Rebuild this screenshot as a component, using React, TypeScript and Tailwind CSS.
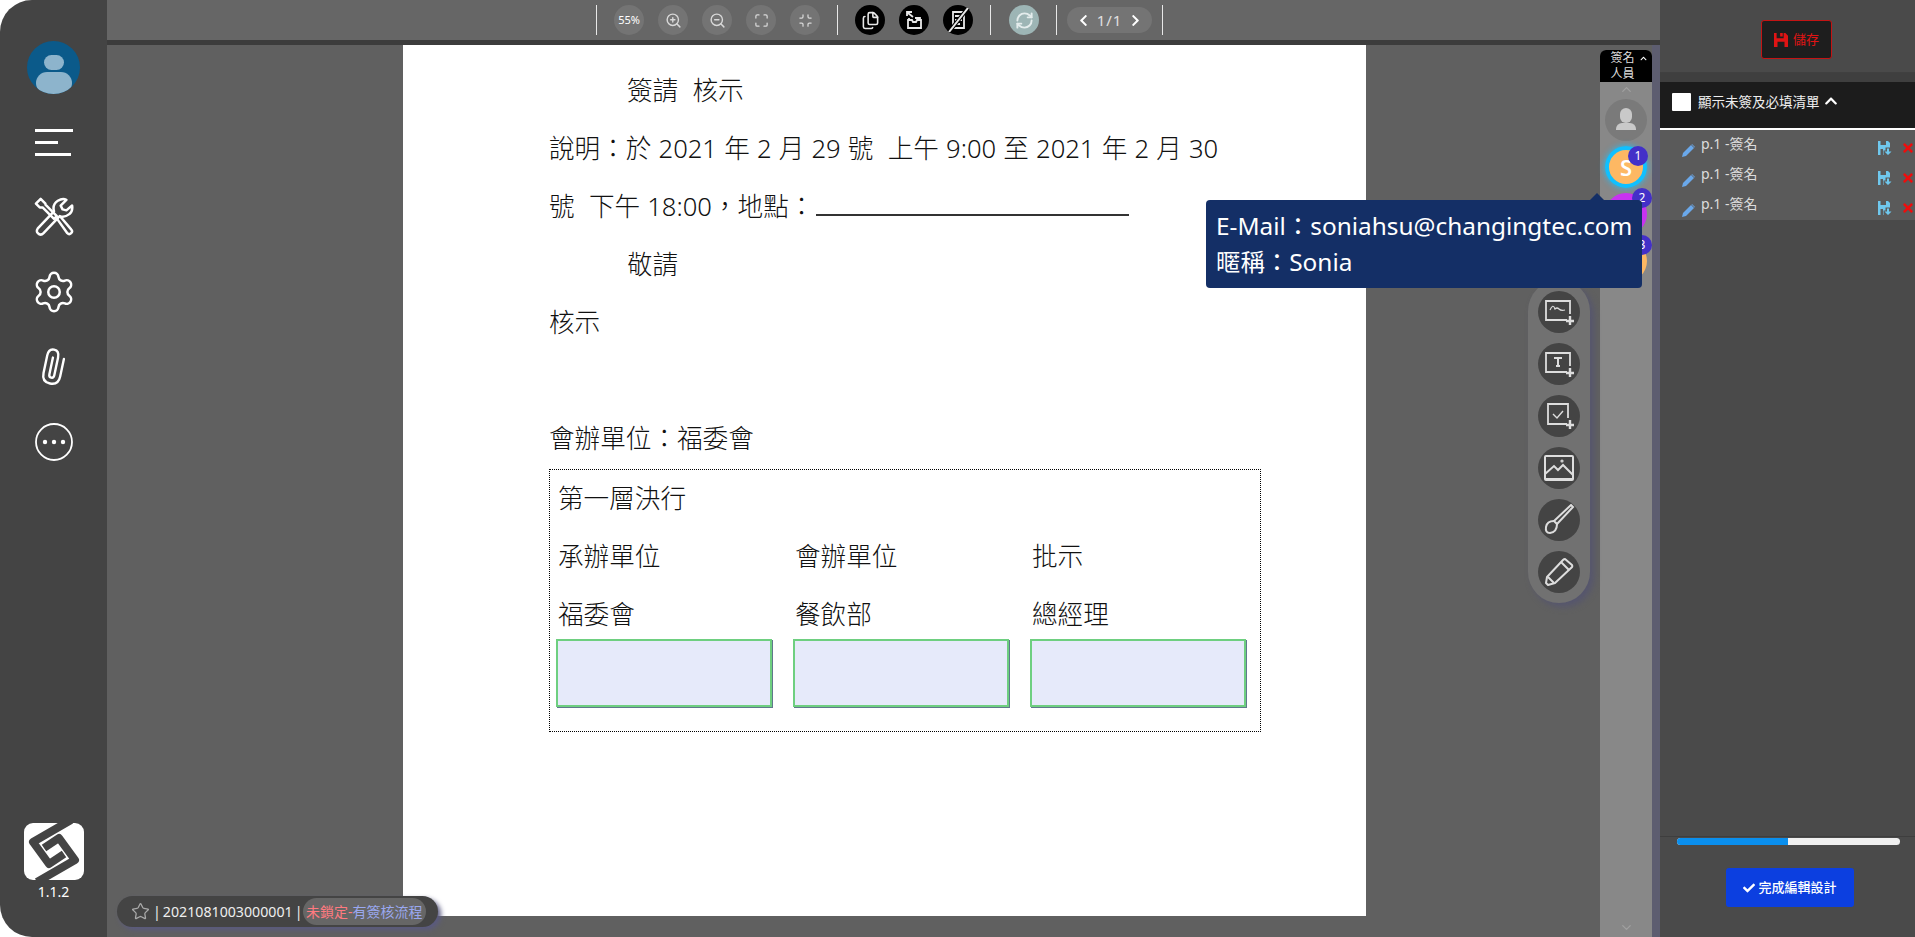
import { ChevronUp, Files, Maximize, Minimize, RefreshCw, Settings, Star, ZoomIn, ZoomOut } from 'lucide-react';
import { FaCheck, FaChevronLeft, FaChevronRight, FaChevronUp, FaTimes } from 'react-icons/fa';

function ToolsIcon() {
  return (
    <svg width="40" height="40" viewBox="0 0 42 42" fill="none" stroke="white" strokeWidth="2.6" strokeLinejoin="round" strokeLinecap="round">
      <path d="M7 2 L2 7 L6 11 L9 11 L21 23 L24 20 L12 8 L12 7 Z" />
      <path d="M25 24 L35 38 Q37 40 39 38 Q41 36 39 34 L28 21" />
      <path d="M4 33 L21 15 Q19 8 25 4 Q30 1 34 3 L28 9 L30 13 L34 14 L40 9 Q41 15 37 18 Q32 22 27 20 L10 38 Q7 41 4 38 Q2 36 4 33 Z" />
    </svg>
  );
}

function ClipIcon() {
  return (
    <svg width="30" height="40" viewBox="0 0 30 40" fill="none" stroke="white" strokeWidth="2.4" strokeLinecap="round">
      <path d="M23 10 V28 Q23 37 14.5 37 Q6 37 6 28 V10 Q6 3 11.5 3 Q17 3 17 10 V28 Q17 31 14.5 31 Q12 31 12 28 V11" transform="rotate(12 15 20)" />
    </svg>
  );
}

function DotsIcon() {
  return (
    <svg width="38" height="38" viewBox="0 0 38 38" fill="none" stroke="white" strokeWidth="1.8">
      <circle cx="19" cy="19" r="18" />
      <circle cx="10" cy="19" r="2.2" fill="white" stroke="none" />
      <circle cx="19" cy="19" r="2.2" fill="white" stroke="none" />
      <circle cx="28" cy="19" r="2.2" fill="white" stroke="none" />
    </svg>
  );
}

function Logo() {
  return (
    <svg width="60" height="58" viewBox="0 0 60 58">
      <rect x="0" y="1" width="60" height="57" rx="9" fill="white" />
      <path d="M47 -2 L9 20 L25 42 L40 32" fill="none" stroke="#444444" strokeWidth="8" strokeLinejoin="round" />
      <path d="M13 60 L51 38 L35 16 L20 26" fill="none" stroke="#444444" strokeWidth="8" strokeLinejoin="round" />
    </svg>
  );
}

function SaveIcon({ size, className }: { size: number; className: string }) {
  return (
    <svg className={className} width={size} height={size} viewBox="0 0 16 16" fill="currentColor">
      <path fillRule="evenodd" d="M0 0 H3 V6 H11 V0 H13 L16 3 V16 H0 Z M4 10 V16 H12 V10 Z" />
      <rect x="7" y="0" width="3" height="4" />
    </svg>
  );
}

function RowSaveIcon() {
  return (
    <svg className="text-[#6fc8ee] shrink-0" width="14" height="14" viewBox="0 0 14 14" fill="currentColor">
      <path fillRule="evenodd" d="M0 0 H2.5 V4 H8 V0 H10 L12 2 V6.5 H7.5 V9.5 H5.5 V14 H0 Z M2.5 8 V14 H5 V8 Z" />
      <path d="M9 7.5 H11 V10.5 H13.5 L10 14 L6.5 10.5 H9 Z" />
    </svg>
  );
}

function RowPencil() {
  return (
    <svg className="text-[#6aa8ea] shrink-0 mt-[10px]" width="13" height="13" viewBox="0 0 13 13" fill="currentColor">
      <path d="M0 13 L1 9 L9 1 L12 4 L4 12 Z" />
      <path d="M10 0 L13 3 L12.5 3.5 L9.5 0.5 Z" />
    </svg>
  );
}

function ToolBtn({ children }: { children: React.ReactNode }) {
  return <div className="w-[30px] h-[30px] rounded-full bg-[#747474] flex items-center justify-center text-[#d8d8d8]">{children}</div>;
}

function BlackBtn({ children }: { children: React.ReactNode }) {
  return <div className="w-[30px] h-[30px] rounded-full bg-black flex items-center justify-center text-[#e8e8e8]">{children}</div>;
}

function Sep() {
  return <div className="w-px h-[30px] bg-[#e8e8e8]" />;
}

function FloatBtn({ children }: { children: React.ReactNode }) {
  return <div className="w-[42px] h-[42px] rounded-full bg-[#444444] flex items-center justify-center">{children}</div>;
}

const floatIcons = [
  <svg key="sign" width="32" height="32" viewBox="0 0 32 32" fill="none" stroke="#dddddd" strokeWidth="1.8">
    <path d="M24 24 H3 V5 H27 V18" />
    <path d="M7 14 Q10 7 12 13 Q14 11 16 13 T22 14" strokeWidth="1.2" />
    <path d="M27 20 V29 M23 25 H31" strokeWidth="2.4" />
  </svg>,
  <svg key="text" width="32" height="32" viewBox="0 0 32 32" fill="none" stroke="#dddddd" strokeWidth="1.8">
    <path d="M24 24 H3 V5 H27 V18" />
    <path d="M11 10 H19 M15 10 V18 M13 18 H17" strokeWidth="2" />
    <path d="M27 20 V29 M23 25 H31" strokeWidth="2.4" />
  </svg>,
  <svg key="check" width="32" height="32" viewBox="0 0 32 32" fill="none" stroke="#dddddd" strokeWidth="1.8">
    <path d="M24 24 H5 V4 H25 V18" />
    <path d="M10 14 L14 18 L20 11" strokeWidth="1.4" />
    <path d="M27 20 V29 M23 25 H31" strokeWidth="2.4" />
  </svg>,
  <svg key="image" width="32" height="32" viewBox="0 0 32 32" fill="none" stroke="#dddddd" strokeWidth="2">
    <rect x="2" y="4" width="28" height="24" rx="1" />
    <path d="M2 22 L11 14 L15 18 L20 13 L30 23 M2 27 H30" />
    <circle cx="19" cy="9" r="0.6" />
  </svg>,
  <svg key="brush" width="32" height="32" viewBox="0 0 32 32" fill="none" stroke="#dddddd" strokeWidth="2">
    <path d="M28 1 L30 3 L14 20 L11 17 Z" />
    <path d="M11 17 Q4 17 3 23 Q2 29 7 29 Q14 28 14 20" />
  </svg>,
  <svg key="pen" width="32" height="32" viewBox="0 0 32 32" fill="none" stroke="#dddddd" strokeWidth="2" strokeLinejoin="round">
    <path d="M22 3 L29 9 Q30 11 28 12 L12 27 L5 29 L3 27 L4 21 L20 4 Q21 3 22 3 Z" />
    <path d="M18 6 L26 14 M5 21 L11 27" />
  </svg>,
];

function Signer({ fill, ring, label, badge }: { fill: string; ring?: boolean; label?: string; badge: string }) {
  return (
    <div className="relative w-[42px] h-[42px] shrink-0">
      <div className={fill}>{label}</div>
      {ring && <div className="absolute inset-0 rounded-full shadow-[0_0_6px_#22bdf5]" />}
      {ring ? (
        <div className="absolute top-0 -right-[1px] w-5 h-5 rounded-full bg-[#4330c8] text-white text-xs flex items-center justify-center">{badge}</div>
      ) : (
        <div className="absolute -top-[5px] -right-[5px] w-5 h-5 rounded-full bg-[#4330c8] text-white text-xs flex items-center justify-center">{badge}</div>
      )}
    </div>
  );
}

export default function App() {
  const rows = [1, 2, 3];
  const columns = [
    { head: '承辦單位', unit: '福委會' },
    { head: '會辦單位', unit: '餐飲部' },
    { head: '批示', unit: '總經理' },
  ];

  return (
    <div className="relative flex h-[937px] w-[1915px] overflow-hidden bg-white font-['Noto_Sans','Noto_Sans_CJK_TC',sans-serif]">
      {/* Left rail */}
      <aside className="w-[107px] shrink-0 bg-[#444444] rounded-l-[32px] flex flex-col items-center pt-[41px] pb-[37px] text-white">
        <div className="w-[53px] h-[53px] rounded-full bg-[#0b5a8a] overflow-hidden flex flex-col items-center pt-[14px]">
          <div className="w-[20px] h-[20px] rounded-full bg-[#8db4cc]" />
          <div className="w-[36px] h-[30px] rounded-full bg-[#8db4cc] mt-[2px]" />
        </div>
        <div className="mt-[35px] w-[38px] flex flex-col gap-[9px]">
          <div className="h-[3px] w-[38px] bg-white" />
          <div className="h-[3px] w-[23px] bg-white" />
          <div className="h-[3px] w-[36px] bg-white" />
        </div>
        <div className="mt-[41px]"><ToolsIcon /></div>
        <Settings className="mt-[32px]" size={46} strokeWidth={1.3} />
        <div className="mt-[32px]"><ClipIcon /></div>
        <div className="mt-[36px]"><DotsIcon /></div>
        <div className="mt-auto"><Logo /></div>
        <div className="mt-1 text-sm leading-4">1.1.2</div>
      </aside>

      {/* Viewer */}
      <main className="w-[1553px] shrink-0 flex flex-col bg-[#606060]">
        <div className="h-10 bg-[#666666] flex items-center pl-[489px] text-xs">
          <Sep />
          <div className="ml-[17px]"><ToolBtn><span className="text-[11px] text-white">55%</span></ToolBtn></div>
          <div className="ml-[14px]"><ToolBtn><ZoomIn size={17} /></ToolBtn></div>
          <div className="ml-[14px]"><ToolBtn><ZoomOut size={17} /></ToolBtn></div>
          <div className="ml-[14px]"><ToolBtn><Maximize size={15} /></ToolBtn></div>
          <div className="ml-[14px]"><ToolBtn><Minimize size={15} /></ToolBtn></div>
          <div className="ml-[17px]"><Sep /></div>
          <div className="ml-[17px]"><BlackBtn><Files size={19} /></BlackBtn></div>
          <div className="ml-[14px]">
            <BlackBtn>
              <svg width="20" height="20" viewBox="0 0 20 20" fill="none" stroke="currentColor" strokeWidth="1.8">
                <path d="M4 10 H8 L9 12 H12 L13 10 H17 V18 H4 Z M5 10 V8 M16 10 V8 H11" />
                <path d="M9 7 L4 3 M3 6 L3 2 L8 2" strokeWidth="1.8" />
              </svg>
            </BlackBtn>
          </div>
          <div className="ml-[14px]">
            <BlackBtn>
              <svg width="24" height="24" viewBox="0 0 24 24" fill="none" stroke="currentColor" strokeWidth="1.8">
                <path d="M7 4 H18 V20 H7 Z M9 8 H16 M9 12 H16 M9 16 H14" />
                <path d="M3 24 L22 0" stroke="black" strokeWidth="4" />
                <path d="M3 24 L22 0" strokeWidth="2" />
              </svg>
            </BlackBtn>
          </div>
          <div className="ml-[17px]"><Sep /></div>
          <div className="ml-[18px] w-[30px] h-[30px] rounded-full bg-[#9db5b5] flex items-center justify-center text-[#e4ecec]"><RefreshCw size={19} strokeWidth={2.4} /></div>
          <div className="ml-[17px]"><Sep /></div>
          <div className="ml-[10px] w-[85px] h-[26px] rounded-full bg-[#747474] flex items-center justify-center gap-[7px] text-[#e0e0e0] text-[15px]">
            <FaChevronLeft className="text-white" size={13} />
            <span className="tracking-[1px]">1/1</span>
            <FaChevronRight className="text-white" size={13} />
          </div>
          <div className="ml-[10px]"><Sep /></div>
        </div>
        <div className="h-[5px] bg-[#3c3c3c]" />

        <div className="flex flex-1 min-h-0">
          {/* Document page */}
          <div className="ml-[296px] w-[963px] h-[871px] shrink-0 bg-white pt-[17px] pl-[146px] text-[25.6px] leading-[58px] text-[#111111] font-light [word-spacing:0.5px]">
            <div className="pl-[78px]">簽請&nbsp;&nbsp;核示</div>
            <div>說明：於 2021 年 2 月 29 號&nbsp;&nbsp;上午 9:00 至 2021 年 2 月 30</div>
            <div>
              號&nbsp;&nbsp;下午 18:00，地點：<span className="inline-block w-[313px] h-[28px] ml-[2px] border-b-2 border-[#333333] align-baseline" />
            </div>
            <div className="pl-[78px]">敬請</div>
            <div>核示</div>
            <div className="h-[58px]" />
            <div>會辦單位：福委會</div>
            <div className="w-[712px] h-[263px] border border-dotted border-black pl-[8px] mt-[1px]">
              <div>第一層決行</div>
              <div className="grid grid-cols-[237px_237px_237px]">
                {columns.map((col) => (
                  <div key={col.head}>
                    <div>{col.head}</div>
                    <div>{col.unit}</div>
                    <div className="-ml-[2px] mt-[-5px] w-[216px] h-[68px] bg-[#e6eafa] border-2 border-[#6ecf80] shadow-[1px_1px_0_#60788c]" />
                  </div>
                ))}
              </div>
            </div>
          </div>

          {/* Signer column */}
          <div className="ml-[234px] w-[52px] shrink-0 bg-[#888888] flex flex-col items-center self-stretch mt-[5px] rounded-t-md">
            <div className="w-[52px] h-[32px] bg-black rounded-t-md flex items-start justify-center gap-1 text-[12px] leading-[16px] text-[#dddddd] pl-1">
              <div className="w-[26px] text-center">簽名 人員</div>
              <FaChevronUp className="mt-[5px] text-white" size={7} />
            </div>
            <ChevronUp className="text-[#a0a0a0]" size={15} />
            <div className="mt-[2px] flex flex-col gap-[5px]">
              <div className="w-[42px] h-[42px] rounded-full bg-[#7a7a7a] flex flex-col items-center pt-[9px]">
                <div className="w-[12px] h-[15px] rounded-full bg-[#c9c9c9]" />
                <div className="w-[20px] h-[7px] rounded-t-md bg-[#c9c9c9]" />
              </div>
              <Signer fill="w-[42px] h-[42px] rounded-full bg-[#fdb863] border-4 border-[#10c0ff] text-white text-[22px] font-semibold flex items-center justify-center" ring label="S" badge="1" />
              <Signer fill="w-[42px] h-[42px] rounded-full bg-[#c832f0]" badge="2" />
              <Signer fill="w-[42px] h-[42px] rounded-full bg-[#fdb863]" badge="3" />
            </div>
            <ChevronUp className="mt-auto mb-[2px] rotate-180 text-[#a0a0a0]" size={15} />
          </div>
          <div className="w-[8px] bg-[#5d5d70] shrink-0" />
        </div>
      </main>

      {/* Right panel */}
      <aside className="flex-1 bg-[#4a4a4a] flex flex-col text-white min-w-0">
        <div className="h-[73px] flex items-start pt-[20px] pl-[101px] border-b border-[#404040]">
          <div className="w-[71px] h-[39px] rounded-[3px] bg-[#1e1e1e] border border-[#c41414] flex items-center justify-center gap-[5px] text-[#e01414] text-[13px]">
            <SaveIcon size={14} className="shrink-0" />
            <span>儲存</span>
          </div>
        </div>
        <div className="h-[9px] bg-[#3f3f3f]" />
        <div className="h-[48px] bg-[#1c1c1c] border-b-2 border-white flex items-start pt-[11px] pl-[12px] gap-[7px] text-[13.5px] leading-[18px]">
          <div className="w-[19px] h-[18px] bg-white rounded-[1px]" />
          <span className="text-[#eeeeee]">顯示未簽及必填清單</span>
          <FaChevronUp size={14} className="-ml-[3px] mt-[1px]" />
        </div>
        <div className="h-[90px] bg-[#5a5a5a]">
          {rows.map((row) => (
            <div key={row} className="h-[30px] flex items-center pl-[22px] text-[14px] text-[#dddddd] overflow-hidden">
              <RowPencil />
              <span className="ml-[6px] mb-[3px] flex-1">p.1 -簽名</span>
              <div className="mt-[5px]"><RowSaveIcon /></div>
              <FaTimes className="ml-[9px] mt-[5px] shrink-0 text-[#ee0d0d]" size={14} />
            </div>
          ))}
        </div>
        <div className="mt-auto border-t border-[#3e3e3e] h-[101px] flex flex-col items-center">
          <div className="mt-[1px] w-[223px] h-[7px] ml-[2px] rounded-full bg-[#f0f0f0] overflow-hidden">
            <div className="w-[111px] h-full bg-[#0a8fee]" />
          </div>
          <div className="mt-[23px] ml-[5px] w-[128px] h-[39px] rounded-[3px] bg-[#0c3fe0] flex items-center justify-center gap-[3px] text-[13px] font-medium">
            <FaCheck size={12} />
            <span>完成編輯設計</span>
          </div>
        </div>
      </aside>

      {/* Floating tool palette */}
      <div className="absolute left-[1528px] top-[280px] w-[62px] h-[323px] rounded-[31px] bg-[#717171] shadow-[4px_4px_6px_#56566e] flex flex-col items-center justify-end gap-[10px] pb-[10px]">
        {floatIcons.map((icon, index) => (
          <FloatBtn key={index}>{icon}</FloatBtn>
        ))}
      </div>

      {/* Signer tooltip */}
      <div className="absolute left-[1206px] top-[200px] w-[436px] h-[88px] rounded-[4px] bg-[#142f66] text-white text-[24.4px] leading-[36px] px-[10px] pt-[8px] whitespace-nowrap">
        <div className="absolute -top-[7px] left-[384px] w-0 h-0 border-x-[7px] border-x-transparent border-b-[7px] border-b-[#142f66]" />
        <div>E-Mail：soniahsu@changingtec.com</div>
        <div>暱稱：Sonia</div>
      </div>

      {/* Document status pill */}
      <div className="absolute left-[117px] top-[896px] w-[321px] h-[31px] rounded-full bg-[#444444] shadow-[3px_3px_5px_#5a5a80] flex items-center pl-[14px] pr-[12px] text-[14.2px] text-[#eeeeee] whitespace-nowrap">
        <Star className="text-[#aaaaaa] shrink-0" size={19} strokeWidth={1.6} />
        <span className="ml-[3px]">|</span>
        <span className="mx-[2px]">2021081003000001</span>
        <span>|</span>
        <span className="ml-auto w-[128px] h-[27px] text-center rounded-full bg-[#666666] text-[14px] leading-[27px]">
          <span className="text-[#ff7a80]">未鎖定-</span>
          <span className="text-[#9aa8f0]">有簽核流程</span>
        </span>
      </div>
    </div>
  );
}
